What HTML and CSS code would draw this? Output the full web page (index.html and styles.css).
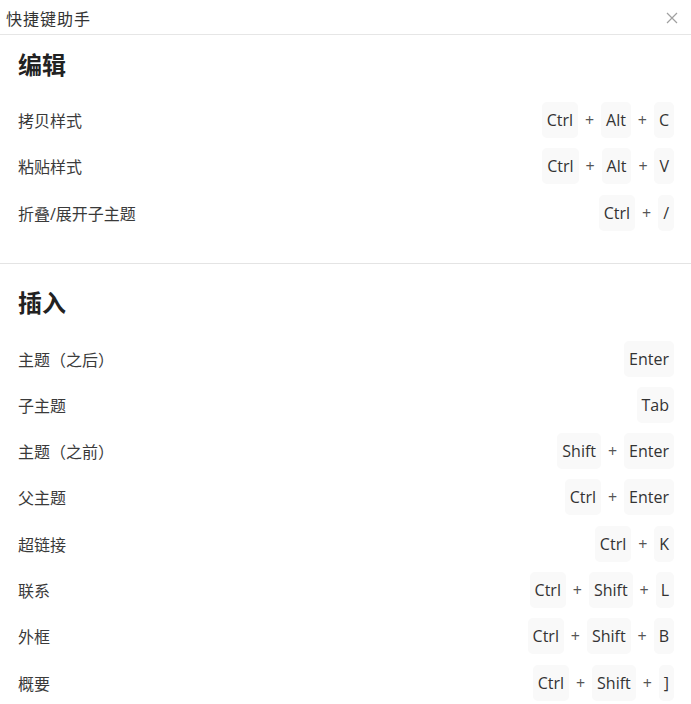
FILE: index.html
```html
<!DOCTYPE html>
<html lang="zh-CN">
<head>
    <meta charset="UTF-8">
    <meta name="viewport" content="width=device-width, initial-scale=1.0">
    <title>快捷键助手</title>
    <link rel="stylesheet" href="styles.css">
</head>
<body>

    <div class="panel">
        <div class="panel-header">
            <span class="panel-title">快捷键助手</span>
            <span class="close-btn">
                <svg width="12" height="12" viewBox="0 0 12 12">
                    <path d="M1 1 L11 11 M11 1 L1 11" stroke="#a0a0a0" stroke-width="1.2" fill="none"/>
                </svg>
            </span>
        </div>

        <div class="section first">
            <h2>编辑</h2>
            <div class="row">
                <span class="label">拷贝样式</span>
                <span class="keys"><kbd>Ctrl</kbd><i>+</i><kbd>Alt</kbd><i>+</i><kbd>C</kbd></span>
            </div>
            <div class="row">
                <span class="label">粘贴样式</span>
                <span class="keys"><kbd>Ctrl</kbd><i>+</i><kbd>Alt</kbd><i>+</i><kbd>V</kbd></span>
            </div>
            <div class="row">
                <span class="label">折叠/展开子主题</span>
                <span class="keys"><kbd>Ctrl</kbd><i>+</i><kbd>/</kbd></span>
            </div>
        </div>

        <div class="section">
            <h2>插入</h2>
            <div class="row">
                <span class="label">主题（之后）</span>
                <span class="keys"><kbd>Enter</kbd></span>
            </div>
            <div class="row">
                <span class="label">子主题</span>
                <span class="keys"><kbd>Tab</kbd></span>
            </div>
            <div class="row">
                <span class="label">主题（之前）</span>
                <span class="keys"><kbd>Shift</kbd><i>+</i><kbd>Enter</kbd></span>
            </div>
            <div class="row">
                <span class="label">父主题</span>
                <span class="keys"><kbd>Ctrl</kbd><i>+</i><kbd>Enter</kbd></span>
            </div>
            <div class="row">
                <span class="label">超链接</span>
                <span class="keys"><kbd>Ctrl</kbd><i>+</i><kbd>K</kbd></span>
            </div>
            <div class="row">
                <span class="label">联系</span>
                <span class="keys"><kbd>Ctrl</kbd><i>+</i><kbd>Shift</kbd><i>+</i><kbd>L</kbd></span>
            </div>
            <div class="row">
                <span class="label">外框</span>
                <span class="keys"><kbd>Ctrl</kbd><i>+</i><kbd>Shift</kbd><i>+</i><kbd>B</kbd></span>
            </div>
            <div class="row">
                <span class="label">概要</span>
                <span class="keys"><kbd>Ctrl</kbd><i>+</i><kbd>Shift</kbd><i>+</i><kbd>]</kbd></span>
            </div>
        </div>
    </div>

</body>
</html>
```

FILE: styles.css
```css
body {
    margin: 0;
    background-color: #ffffff;
    color: #333;
    font-family: "Open Sans", "Noto Sans CJK SC", sans-serif;
    overflow: hidden;
}

.panel {
    width: 100%;
}

.panel-header {
    height: 33px;
    display: flex;
    align-items: center;
    justify-content: space-between;
    padding: 1px 13px 0 6px;
    border-bottom: 1px solid #e6e6e6;
}

.panel-title {
    font-size: 16px;
    letter-spacing: 1px;
    color: #333;
}

.close-btn {
    display: flex;
    align-items: center;
}

.section {
    padding: 17px 17px 32px 18px;
    border-top: 1px solid #e4e4e4;
}

/* 第一段紧贴标题栏 */
.section.first {
    padding-top: 8px;
    border-top: none;
}

h2 {
    margin: 0 0 15px 0;
    font-size: 24px;
    line-height: 44px;
    font-weight: bold;
    color: #222;
}

.section + .section h2 {
    margin-bottom: 16px;
}

.row {
    display: flex;
    align-items: center;
    justify-content: space-between;
    height: 36px;
    margin-bottom: 10.3px;
}

.row:last-child {
    margin-bottom: 0;
}

.label {
    font-size: 16px;
    color: #3a3a3a;
}

.keys {
    display: flex;
    align-items: center;
}

kbd {
    font-family: "Open Sans", sans-serif;
    font-size: 16px;
    color: #333;
    background-color: #f9f9f9;
    border-radius: 5px;
    padding: 0 5px;
    height: 36px;
    line-height: 36px;
}

.keys i {
    font-style: normal;
    font-size: 16px;
    color: #555;
    width: 23px;
    text-align: center;
}
```
